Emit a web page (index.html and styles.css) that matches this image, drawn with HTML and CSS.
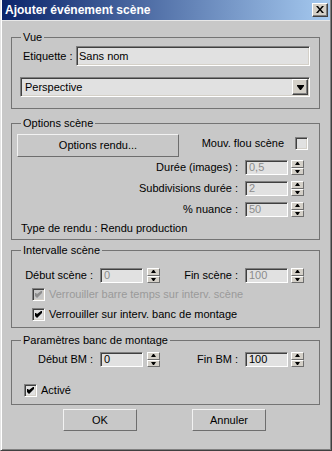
FILE: index.html
```html
<!DOCTYPE html>
<html>
<head>
<meta charset="utf-8">
<link rel="stylesheet" href="styles.css">
</head>
<body>
<div class="window">
  <div class="titlebar">
    <span class="title">Ajouter événement scène</span>
    <span class="close"><svg width="8" height="7" viewBox="0 0 8 7"><path d="M0 0h2l2 2.4L6 0h2L5 3.5 8 7H6L4 4.6 2 7H0l3-3.5z" fill="#000"/></svg></span>
  </div>

  <div class="group g-vue">
    <span class="legend">Vue</span>
    <div class="row">
      <span class="lbl">Etiquette :</span>
      <div class="edit edit-name">Sans nom</div>
    </div>
    <div class="combo">
      <span class="combo-text">Perspective</span>
      <span class="combo-btn"><svg width="7" height="5" viewBox="0 0 7 5"><path d="M0 0h7v1L4 5H3L0 1z" fill="#000"/></svg></span>
    </div>
  </div>

  <div class="group g-opt">
    <span class="legend">Options scène</span>
    <div class="opt-top">
      <div class="btn btn-wide">Options rendu...</div>
      <div class="mouv">
        <span>Mouv. flou scène</span>
        <span class="check"></span>
      </div>
    </div>
    <div class="srow">
      <span class="lbl">Durée (images) :</span>
      <div class="field disabled">0,5</div>
      <div class="spin"><span class="up"><svg width="5" height="3" viewBox="0 0 5 3"><path d="M2 0h1l2 3H0z" fill="#000"/></svg></span><span class="down"><svg width="5" height="3" viewBox="0 0 5 3"><path d="M0 0h5L3 3H2z" fill="#000"/></svg></span></div>
    </div>
    <div class="srow">
      <span class="lbl">Subdivisions durée :</span>
      <div class="field disabled">2</div>
      <div class="spin"><span class="up"><svg width="5" height="3" viewBox="0 0 5 3"><path d="M2 0h1l2 3H0z" fill="#000"/></svg></span><span class="down"><svg width="5" height="3" viewBox="0 0 5 3"><path d="M0 0h5L3 3H2z" fill="#000"/></svg></span></div>
    </div>
    <div class="srow">
      <span class="lbl">% nuance :</span>
      <div class="field disabled">50</div>
      <div class="spin"><span class="up"><svg width="5" height="3" viewBox="0 0 5 3"><path d="M2 0h1l2 3H0z" fill="#000"/></svg></span><span class="down"><svg width="5" height="3" viewBox="0 0 5 3"><path d="M0 0h5L3 3H2z" fill="#000"/></svg></span></div>
    </div>
    <div class="type">Type de rendu : Rendu production</div>
  </div>

  <div class="group g-int">
    <span class="legend">Intervalle scène</span>
    <div class="prow">
      <span class="plbl">Début scène :</span>
      <div class="field disabled">0</div>
      <div class="spin"><span class="up"><svg width="5" height="3" viewBox="0 0 5 3"><path d="M2 0h1l2 3H0z" fill="#000"/></svg></span><span class="down"><svg width="5" height="3" viewBox="0 0 5 3"><path d="M0 0h5L3 3H2z" fill="#000"/></svg></span></div>
      <div class="pright">
        <span class="lbl">Fin scène :</span>
        <div class="field disabled">100</div>
        <div class="spin"><span class="up"><svg width="5" height="3" viewBox="0 0 5 3"><path d="M2 0h1l2 3H0z" fill="#000"/></svg></span><span class="down"><svg width="5" height="3" viewBox="0 0 5 3"><path d="M0 0h5L3 3H2z" fill="#000"/></svg></span></div>
      </div>
    </div>
    <div class="crow crow-first dis">
      <span class="check checked disabled"><svg width="7" height="7" viewBox="0 0 7 7"><path d="M0 2h1l1 1 4-3h1v2L2 7 0 5z" fill="#8c8c8c"/></svg></span>
      <span>Verrouiller barre temps sur interv. scène</span>
    </div>
    <div class="crow">
      <span class="check checked"><svg width="7" height="7" viewBox="0 0 7 7"><path d="M0 2h1l1 1 4-3h1v2L2 7 0 5z" fill="#000"/></svg></span>
      <span>Verrouiller sur interv. banc de montage</span>
    </div>
  </div>

  <div class="group g-bm">
    <span class="legend">Paramètres banc de montage</span>
    <div class="prow">
      <span class="plbl">Début BM :</span>
      <div class="field">0</div>
      <div class="spin"><span class="up"><svg width="5" height="3" viewBox="0 0 5 3"><path d="M2 0h1l2 3H0z" fill="#000"/></svg></span><span class="down"><svg width="5" height="3" viewBox="0 0 5 3"><path d="M0 0h5L3 3H2z" fill="#000"/></svg></span></div>
      <div class="pright">
        <span class="lbl">Fin BM :</span>
        <div class="field">100</div>
        <div class="spin"><span class="up"><svg width="5" height="3" viewBox="0 0 5 3"><path d="M2 0h1l2 3H0z" fill="#000"/></svg></span><span class="down"><svg width="5" height="3" viewBox="0 0 5 3"><path d="M0 0h5L3 3H2z" fill="#000"/></svg></span></div>
      </div>
    </div>
    <div class="crow crow-act">
      <span class="check checked"><svg width="7" height="7" viewBox="0 0 7 7"><path d="M0 2h1l1 1 4-3h1v2L2 7 0 5z" fill="#000"/></svg></span>
      <span>Activé</span>
    </div>
  </div>

  <div class="buttons">
    <div class="btn btn-dlg">OK</div>
    <div class="btn btn-dlg">Annuler</div>
  </div>
</div>
</body>
</html>
```

FILE: styles.css
```css
* { box-sizing: border-box; }
html, body { margin: 0; padding: 0; background: #c8c8c8; }
body {
  font-family: "Liberation Sans", Arial, sans-serif;
  font-size: 11px;
  line-height: 13px;
  color: #000;
}
.window {
  width: 332px;
  height: 451px;
  background: #c8c8c8;
  border-left: 1px solid #e4e4e4;
  border-right: 1px solid #404040;
  border-bottom: 1px solid #404040;
  padding: 0 1px 1px 1px;
  box-shadow: inset 1px 0 #ffffff, inset -1px -1px #808080;
  overflow: hidden;
}
.titlebar {
  height: 21px;
  display: flex;
  align-items: center;
  background: linear-gradient(to right, #0a246a, #a6caf0);
  padding-left: 3px;
  padding-right: 2px;
  border-bottom: 1px solid #e8e8e8;
}
.title {
  color: #fff;
  font-weight: bold;
  font-size: 12px;
  flex: 1;
}
.close {
  width: 16px;
  height: 14px;
  background: #d4d0c8;
  border: 1px solid;
  border-color: #ffffff #404040 #404040 #ffffff;
  box-shadow: inset -1px -1px #808080;
  display: flex;
  align-items: center;
  justify-content: center;
  padding-bottom: 1px;
}
.close svg { display: block; }

.group {
  position: relative;
  width: 309px;
  margin-left: 9px;
  border: 1px solid #747474;
  padding: 0 11px 0 8px;
}
.legend {
  position: absolute;
  top: -7px;
  left: 9px;
  padding: 0 2px;
  background: #c8c8c8;
  line-height: 13px;
}
.g-vue { margin-top: 16px; height: 72px; padding-top: 8px; padding-right: 9px; }
.g-opt { margin-top: 14px; height: 117px; padding-top: 10px; padding-left: 5px; }
.g-int { margin-top: 10px; height: 78px; padding-top: 17px; }
.g-bm  { margin-top: 12px; height: 65px; padding-top: 11px; }

.row { display: flex; align-items: center; height: 20px; }
.row .lbl { margin-left: 3px; }
.edit {
  margin-left: auto;
  width: 234px;
  height: 20px;
  border: 1px solid;
  border-color: #808080 #ffffff #ffffff #808080;
  box-shadow: inset 1px 1px #404040, inset -1px -1px #d4d0c8;
  background: #e1e1e1;
  padding: 3px 0 0 2px;
}
.combo {
  margin-top: 11px;
  width: 290px;
  height: 20px;
  border: 1px solid;
  border-color: #808080 #ffffff #ffffff #808080;
  box-shadow: inset 1px 1px #404040, inset -1px -1px #d4d0c8;
  background: #e1e1e1;
  padding: 1px;
  display: flex;
  align-items: center;
}
.combo-text { flex: 1; padding-left: 3px; }
.combo-btn {
  width: 16px;
  height: 16px;
  background: #d4d0c8;
  border: 1px solid;
  border-color: #ffffff #404040 #404040 #ffffff;
  box-shadow: inset -1px -1px #808080;
  display: flex;
  align-items: center;
  justify-content: center;
}
.combo-btn svg { display: block; }

.btn {
  background: #c8c8c8;
  border: 1px solid;
  border-color: #f2f2f2 #6e6e6e #6e6e6e #f2f2f2;
  display: flex;
  align-items: center;
  justify-content: center;
}
.btn-wide { width: 162px; height: 23px; }
.opt-top { display: flex; align-items: flex-start; }
.mouv {
  margin-left: auto;
  margin-top: 3px;
  display: flex;
  align-items: center;
}
.mouv .check { margin-left: 11px; }

.check {
  width: 13px;
  height: 13px;
  border: 1px solid;
  border-color: #808080 #ffffff #ffffff #808080;
  box-shadow: inset 1px 1px #404040, inset -1px -1px #d4d0c8;
  background: #e1e1e1;
  display: flex;
  align-items: center;
  justify-content: center;
  flex: none;
}
.check svg { display: block; }
.check.disabled { background: #c8c8c8; }

.srow {
  display: flex;
  justify-content: flex-end;
  align-items: center;
  height: 15px;
  margin-top: 6px;
  margin-right: 4px;
}
.opt-top + .srow { margin-top: 3px; }
.srow .field { margin-left: 7px; }

.field {
  width: 43px;
  height: 15px;
  border: 1px solid;
  border-color: #808080 #ffffff #ffffff #808080;
  box-shadow: inset 1px 1px #404040;
  background: #e1e1e1;
  padding: 0 0 0 3px;
  line-height: 13px;
}
.field.disabled { color: #8c8c8c; }
.spin {
  width: 13px;
  height: 15px;
  margin-left: 3px;
  display: flex;
  flex-direction: column;
  flex: none;
}
.spin span {
  flex: 1;
  background: #d4d0c8;
  border: 1px solid;
  border-color: #ffffff #6e6e6e #6e6e6e #ffffff;
  display: flex;
  align-items: center;
  justify-content: center;
}
.spin svg { display: block; }

.type { margin-top: 5px; margin-left: 4px; }

.prow { display: flex; align-items: center; height: 15px; }
.plbl { width: 80px; text-align: right; padding-right: 7px; }
.prow .spin { margin-left: 4px; }
.pright {
  margin-left: auto;
  margin-right: 4px;
  display: flex;
  align-items: center;
}
.pright .field { margin-left: 7px; }
.pright .spin { margin-left: 3px; }

.crow { display: flex; align-items: center; height: 13px; margin-top: 7px; margin-left: 12px; }
.crow .check { margin-right: 4px; }
.crow-first { margin-top: 5px; }
.crow.dis { color: #9a9a9a; }
.crow-act { margin-top: 17px; margin-left: 4px; }

.buttons {
  display: flex;
  margin-top: 4px;
  padding-left: 61px;
  gap: 55px;
}
.btn-dlg { width: 74px; height: 22px; }
```
